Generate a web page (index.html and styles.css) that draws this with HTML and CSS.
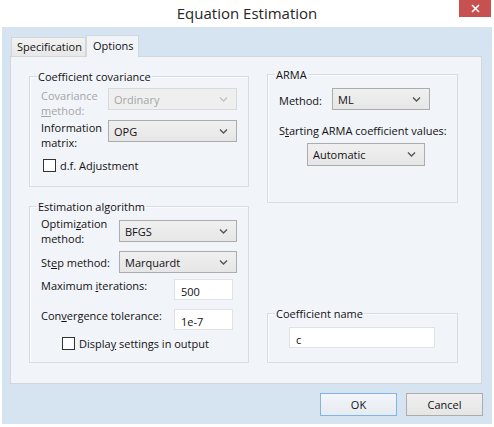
FILE: index.html
```html
<!DOCTYPE html>
<html>
<head>
<meta charset="utf-8">
<link rel="stylesheet" href="styles.css">
</head>
<body>
<div class="window">
  <div class="titlebar">
    <div class="title">Equation Estimation</div>
    <div class="tb-right">
      <div class="close"><svg width="9" height="9" viewBox="0 0 9 9"><path d="M1 1L8 8M8 1L1 8" stroke="#fff" stroke-width="1.6" fill="none"/></svg></div>
    </div>
  </div>
  <div class="frame">
    <div class="tabs">
      <div class="tab tab-spec">Specification</div>
      <div class="tab tab-opt active">Options</div>
    </div>
    <div class="panel">
      <div class="col col-left">
        <fieldset class="group g-cov">
          <legend>Coefficient covariance</legend>
          <div class="row r-cov1">
            <div class="lbl two disabled w67">Covariance<br><u>m</u>ethod:</div>
            <div class="combo disabled w129"><span>Ordinary</span><svg class="chev" width="9" height="5" viewBox="0 0 9 5"><path d="M1 0.5L4.5 4L8 0.5" fill="none" stroke="currentColor" stroke-width="1.4"/></svg></div>
          </div>
          <div class="row r-cov2">
            <div class="lbl two w67">Information<br>matrix:</div>
            <div class="combo w129"><span>OPG</span><svg class="chev" width="9" height="5" viewBox="0 0 9 5"><path d="M1 0.5L4.5 4L8 0.5" fill="none" stroke="currentColor" stroke-width="1.4"/></svg></div>
          </div>
          <div class="check r-df">
            <span class="box"></span><span>d.f. Ad<u>j</u>ustment</span>
          </div>
        </fieldset>
        <fieldset class="group g-est">
          <legend>Estimation algorithm</legend>
          <div class="row r-opt">
            <div class="lbl two w78">Optimi<u>z</u>ation<br>method:</div>
            <div class="combo w118"><span>BFGS</span><svg class="chev" width="9" height="5" viewBox="0 0 9 5"><path d="M1 0.5L4.5 4L8 0.5" fill="none" stroke="currentColor" stroke-width="1.4"/></svg></div>
          </div>
          <div class="row r-step">
            <div class="lbl w78">St<u>e</u>p method:</div>
            <div class="combo w118"><span>Marquardt</span><svg class="chev" width="9" height="5" viewBox="0 0 9 5"><path d="M1 0.5L4.5 4L8 0.5" fill="none" stroke="currentColor" stroke-width="1.4"/></svg></div>
          </div>
          <div class="row r-max">
            <div class="lbl w133">Maximum <u>i</u>terations:</div>
            <div class="input w59">500</div>
          </div>
          <div class="row r-conv">
            <div class="lbl w133">Con<u>v</u>ergence tolerance:</div>
            <div class="input w59">1e-7</div>
          </div>
          <div class="check r-disp">
            <span class="box"></span><span>Displa<u>y</u> settings in output</span>
          </div>
        </fieldset>
      </div>
      <div class="col col-right">
        <fieldset class="group g-arma">
          <legend>ARMA</legend>
          <div class="row r-meth">
            <div class="lbl w53">Method:</div>
            <div class="combo w98"><span>ML</span><svg class="chev" width="9" height="5" viewBox="0 0 9 5"><path d="M1 0.5L4.5 4L8 0.5" fill="none" stroke="currentColor" stroke-width="1.4"/></svg></div>
          </div>
          <div class="lbl r-start">S<u>t</u>arting ARMA coefficient values:</div>
          <div class="row r-auto">
            <div class="combo w118 h23"><span>Automatic</span><svg class="chev" width="9" height="5" viewBox="0 0 9 5"><path d="M1 0.5L4.5 4L8 0.5" fill="none" stroke="currentColor" stroke-width="1.4"/></svg></div>
          </div>
        </fieldset>
        <fieldset class="group g-name">
          <legend>Coef<u>f</u>icient name</legend>
          <div class="row r-name">
            <div class="input w146">c</div>
          </div>
        </fieldset>
      </div>
    </div>
    <div class="buttons">
      <div class="btn default">OK</div>
      <div class="btn">Cancel</div>
    </div>
  </div>
</div>
</body>
</html>
```
FILE: styles.css
```css
* { box-sizing: border-box; }
html, body { margin: 0; padding: 0; }
body {
  width: 494px;
  height: 427px;
  overflow: hidden;
  background: #ffffff;
  font-family: "Open Sans", "Noto Sans", "Liberation Sans", sans-serif;
  font-size: 11px;
  color: #111;
}
.window {
  width: 494px;
  height: 427px;
  display: flex;
  flex-direction: column;
}
.titlebar {
  height: 27px;
  flex: none;
  display: grid;
  grid-template-columns: 1fr auto 1fr;
  background: #ffffff;
}
.title {
  grid-column: 2;
  font-size: 15px;
  line-height: 26px;
  color: #262626;
}
.tb-right {
  grid-column: 3;
  display: flex;
  justify-content: flex-end;
  align-items: flex-start;
  padding-right: 3px;
}
.close {
  width: 32px;
  height: 17px;
  background: #c75050;
  display: flex;
  align-items: center;
  justify-content: center;
}
.frame {
  flex: 1;
  margin: 0 2px 3px 2px;
  background: #d6e3f1;
  padding: 8px 10px 0 8px;
  display: flex;
  flex-direction: column;
}
.tabs {
  display: flex;
  align-items: flex-end;
  height: 21px;
  padding-left: 1px;
}
.tab {
  border: 1px solid #d3d6da;
  border-bottom: 0;
  line-height: 18px;
  padding-left: 5px;
  white-space: nowrap;
}
.tab-spec {
  width: 75px;
  height: 19px;
  background: linear-gradient(#f2f2f2, #e8e8e8);
}
.tab-opt {
  width: 53px;
  height: 22px;
  padding-left: 6px;
  line-height: 20px;
  background: #f1f4f9;
  margin-bottom: -1px;
  position: relative;
  z-index: 1;
}
.panel {
  height: 328px;
  flex: none;
  border: 1px solid #d3d6da;
  background: #f1f4f9;
  display: flex;
  align-items: flex-start;
  gap: 18px;
  padding: 10px 23px 0 18px;
}
.col {
  display: flex;
  flex-direction: column;
}
.col-left {
  width: 220px;
  margin-top: 2px;
  gap: 12px;
}
.col-right {
  width: 191px;
  gap: 103px;
}
.group {
  margin: 0;
  padding: 0 11px;
  min-width: 0;
  border: 1px solid #d7dce2;
  box-shadow: inset 1px 1px 0 #fbfcfd;
}
.group legend {
  padding: 0 1px;
  margin-left: -4px;
  line-height: 15px;
}
.g-cov { height: 118px; }
.g-est { height: 164px; }
.g-arma { height: 136px; }
.g-name { height: 57px; }

.row {
  display: flex;
  align-items: flex-start;
}
.lbl {
  flex: none;
  line-height: 15px;
  white-space: nowrap;
}
.lbl.disabled { color: #a6a6a6; }
.w53 { width: 53px; }
.w67 { width: 67px; }
.w78 { width: 78px; }
.w133 { width: 133px; }
.w59 { width: 59px; }
.w98 { width: 98px; }
.w118 { width: 118px; }
.w129 { width: 129px; }
.w146 { width: 146px; }

.combo {
  flex: none;
  height: 22px;
  border: 1px solid #acacac;
  background: linear-gradient(#f0f0f0, #e6e6e6);
  display: flex;
  align-items: center;
  justify-content: space-between;
  padding: 0 8px 0 5px;
  color: #111;
}
.combo.h23 { height: 23px; }
.combo .chev { color: #555; }
.combo.disabled {
  border-color: #d9d9d9;
  background: #efefef;
  color: #a6a6a6;
}
.combo.disabled .chev { color: #c2c2c2; }
.input {
  flex: none;
  height: 21px;
  border: 1px solid #dfe2e6;
  background: #ffffff;
  padding: 4px 0 0 6px;
  line-height: 15px;
}
.check {
  display: flex;
  align-items: center;
  gap: 4px;
  height: 16px;
}
.box {
  width: 13px;
  height: 13px;
  border: 1px solid #333;
  background: #fff;
}

/* Coefficient covariance */
.r-cov1 { margin-top: 4px; }
.r-cov2 { margin-top: 2px; }
.r-df { margin-top: 7px; margin-left: 2px; }

/* Estimation algorithm */
.r-opt { margin-top: 2px; align-items: center; }
.r-step { margin-top: 5px; align-items: center; }
.r-max { margin-top: 6px; }
.r-max .lbl { margin-top: -1px; }
.r-conv { margin-top: 9px; }
.r-conv .lbl { margin-top: -1px; }
.r-disp { margin-top: 5px; margin-left: 21px; }

/* ARMA */
.r-meth { margin-top: 6px; }
.r-meth .lbl { padding-top: 5px; }
.r-start { margin-top: 13px; }
.r-auto { margin-top: 5px; padding-left: 28px; }

/* Coefficient name */
.r-name { margin-top: 6px; padding-left: 10px; }

.buttons {
  display: flex;
  justify-content: flex-end;
  gap: 9px;
  margin-top: 9px;
  margin-right: -1px;
}
.btn {
  width: 77px;
  height: 23px;
  border: 1px solid #acacac;
  background: linear-gradient(#f0f0f0, #e5e5e5);
  text-align: center;
  line-height: 21px;
}
.btn.default {
  border-color: #7eb4ea;
  background: linear-gradient(#f3f6fa, #e6ebf0);
}
```
